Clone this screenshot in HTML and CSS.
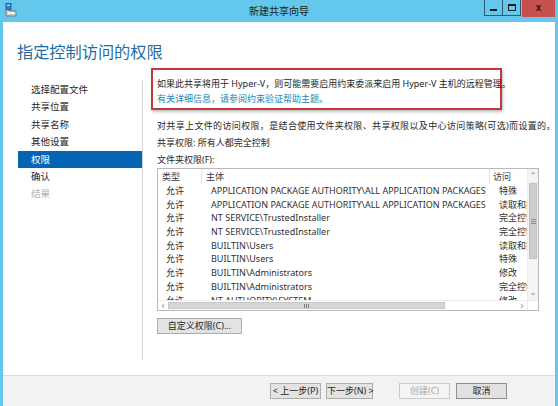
FILE: index.html
```html
<!DOCTYPE html>
<html lang="zh-CN">
<head>
<meta charset="utf-8">
<title>新建共享向导</title>
<link rel="stylesheet" href="styles.css">
</head>
<body>
<div class="window">
  <div class="titlebar">
    <svg class="app-icon" width="12" height="14" viewBox="0 0 12 14">
      <rect x="1" y="0.5" width="5" height="6" fill="#3a7fc4" stroke="#1d4f86" stroke-width="0.8"/>
      <rect x="2" y="1.5" width="3" height="1.5" fill="#9fd0f5"/>
      <path d="M1 7 L4 7 L5 8 L11 8 L11 13 L1 13 Z" fill="#c9c9c9" stroke="#6f6f6f" stroke-width="0.8"/>
      <rect x="2.5" y="9" width="7" height="2" fill="#f4f4f4"/>
    </svg>
    <div class="title">新建共享向导</div>
    <div class="caption-buttons">
      <div class="cap-btn"><span class="glyph-min"></span></div>
      <div class="cap-btn"><span class="glyph-max"></span></div>
      <div class="cap-close">x</div>
    </div>
  </div>

  <div class="content">
    <h1 class="heading">指定控制访问的权限</h1>
    <div class="body">
      <ul class="steps">
        <li class="step">选择配置文件</li>
        <li class="step">共享位置</li>
        <li class="step">共享名称</li>
        <li class="step">其他设置</li>
        <li class="step active">权限</li>
        <li class="step">确认</li>
        <li class="step disabled">结果</li>
      </ul>
      <div class="main">
        <div class="notice">
          <div class="notice-line">如果此共享将用于 Hyper-V，则可能需要启用约束委派来启用 Hyper-V 主机的远程管理。</div>
          <div class="notice-line link">有关详细信息，请参阅约束验证帮助主题。</div>
        </div>
        <p class="line first">对共享上文件的访问权限，是结合使用文件夹权限、共享权限以及中心访问策略(可选)而设置的。</p>
        <p class="line">共享权限: 所有人都完全控制</p>
        <p class="line">文件夹权限(F):</p>

        <div class="listview">
          <div class="viewport">
            <div class="row header">
              <div class="c-type">类型</div>
              <div class="c-who">主体</div>
              <div class="c-acc">访问</div>
            </div>
            <div class="row"><div class="c-type">允许</div><div class="c-who">APPLICATION PACKAGE AUTHORITY\ALL APPLICATION PACKAGES</div><div class="c-acc">特殊</div></div>
            <div class="row"><div class="c-type">允许</div><div class="c-who">APPLICATION PACKAGE AUTHORITY\ALL APPLICATION PACKAGES</div><div class="c-acc">读取和执行</div></div>
            <div class="row"><div class="c-type">允许</div><div class="c-who">NT SERVICE\TrustedInstaller</div><div class="c-acc">完全控制</div></div>
            <div class="row"><div class="c-type">允许</div><div class="c-who">NT SERVICE\TrustedInstaller</div><div class="c-acc">完全控制</div></div>
            <div class="row"><div class="c-type">允许</div><div class="c-who">BUILTIN\Users</div><div class="c-acc">读取和执行</div></div>
            <div class="row"><div class="c-type">允许</div><div class="c-who">BUILTIN\Users</div><div class="c-acc">特殊</div></div>
            <div class="row"><div class="c-type">允许</div><div class="c-who">BUILTIN\Administrators</div><div class="c-acc">修改</div></div>
            <div class="row"><div class="c-type">允许</div><div class="c-who">BUILTIN\Administrators</div><div class="c-acc">完全控制</div></div>
            <div class="row"><div class="c-type">允许</div><div class="c-who">NT AUTHORITY\SYSTEM</div><div class="c-acc">修改</div></div>
          </div>
          <div class="vscroll">
            <div class="arrow up">⌃</div>
            <div class="vthumb"><span class="grip-h"></span></div>
            <div class="spacer"></div>
            <div class="arrow down">⌄</div>
          </div>
          <div class="hscroll">
            <div class="harrow">&lsaquo;</div>
            <div class="hthumb"><span class="grip-v"></span></div>
            <div class="spacer"></div>
            <div class="harrow">&rsaquo;</div>
          </div>
          <div class="corner"></div>
        </div>

        <button class="btn custom">自定义权限(C)...</button>
      </div>
    </div>
  </div>

  <div class="footer">
    <button class="btn nav prev">&lt; 上一步(P)</button>
    <button class="btn nav next">下一步(N) &gt;</button>
    <button class="btn nav create" disabled>创建(C)</button>
    <button class="btn nav cancel">取消</button>
  </div>
</div>
</body>
</html>
```

FILE: styles.css
```css
* { box-sizing: border-box; }

html, body {
  margin: 0;
  padding: 0;
  width: 558px;
  height: 406px;
  overflow: hidden;
  background: #ffffff;
  font-family: "Noto Sans", "Noto Sans CJK SC", sans-serif;
  font-size: 9px;
  color: #262626;
}

.window {
  width: 558px;
  height: 406px;
  display: flex;
  flex-direction: column;
  border-left: 3px solid #64c7ec;
  border-right: 3px solid #64c7ec;
}

/* ---------- title bar ---------- */
.titlebar {
  height: 22px;
  flex: none;
  background: #64c7ec;
  display: flex;
  align-items: flex-start;
  position: relative;
}

.app-icon {
  margin: 3px 0 0 2px;
  flex: none;
}

.title {
  position: absolute;
  left: 0;
  right: 0;
  top: 4px;
  text-align: center;
  font-size: 10px;
  line-height: 14px;
  color: #1b1b1b;
}

.caption-buttons {
  margin-left: auto;
  display: flex;
  align-items: flex-start;
  position: relative;
}

.cap-btn {
  width: 19px;
  height: 16px;
  border: 1px solid #2f5d78;
  border-top: none;
  margin-right: -1px;
  display: flex;
  align-items: center;
  justify-content: center;
}

.glyph-min {
  width: 7px;
  height: 2px;
  background: #1a1a1a;
  margin-top: 4px;
}

.glyph-max {
  width: 8px;
  height: 7px;
  border: 1.5px solid #1a1a1a;
  border-top-width: 2px;
}

.cap-close {
  width: 33px;
  height: 17px;
  margin-left: 2px;
  background: #c7504f;
  color: #2a1414;
  font-size: 10px;
  font-weight: bold;
  line-height: 15px;
  text-align: center;
  font-family: "Liberation Sans", sans-serif;
}

/* ---------- content ---------- */
.content {
  flex: 1;
  display: flex;
  flex-direction: column;
  background: #ffffff;
}

.heading {
  margin: 0;
  padding: 17px 0 0 14px;
  height: 46px;
  font-size: 16.2px;
  line-height: 26px;
  font-weight: normal;
  color: #1f6c9d;
}

.body {
  flex: 1;
  display: flex;
  align-items: flex-start;
}

.steps {
  list-style: none;
  margin: 12px 0 0 0;
  padding: 1px 0 0 15px;
  width: 140px;
  height: 280px;
  border-right: 1px solid #d6d6d6;
  flex: none;
}

.step {
  height: 17.4px;
  line-height: 17.4px;
  padding-left: 13px;
  font-size: 9.5px;
  color: #262626;
}

.step.active {
  background: #0565b2;
  color: #ffffff;
}

.step.disabled {
  color: #b4b4b4;
}

.main {
  margin-left: 8px;
  width: 390px;
  display: flex;
  flex-direction: column;
  align-items: flex-start;
}

.notice {
  width: 351px;
  height: 42px;
  border: 2px solid #c3393a;
  box-shadow: 1px 2px 3px rgba(0, 0, 0, 0.25);
  padding: 7px 0 0 4px;
}

.notice-line {
  line-height: 14.5px;
  white-space: nowrap;
  color: #262626;
}

.notice-line.link {
  color: #1b86b4;
}

.line {
  margin: 2px 0 0 6px;
  line-height: 15px;
  white-space: nowrap;
}

.line.first {
  margin-top: 8px;
  letter-spacing: 0.35px;
}

/* ---------- list view ---------- */
.listview {
  margin: 1px 0 0 6px;
  width: 382px;
  height: 143px;
  border: 1px solid #b9b9b9;
  display: grid;
  grid-template-columns: 1fr 11px;
  grid-template-rows: 1fr 10px;
  background: #ffffff;
}

.viewport {
  overflow: hidden;
}

.row {
  display: flex;
  height: 13.7px;
  line-height: 13.7px;
  white-space: nowrap;
  color: #303030;
}

.row.header {
  height: 15px;
  line-height: 15px;
  color: #3a3a3a;
}

.c-type {
  width: 44px;
  flex: none;
  padding-left: 8px;
}

.c-who {
  width: 288px;
  flex: none;
  padding-left: 9px;
  overflow: hidden;
}

.c-acc {
  width: 60px;
  flex: none;
  padding-left: 9px;
  overflow: hidden;
}

.header .c-type { padding-left: 4px; border-right: 1px solid #e3e3e3; }
.header .c-who { padding-left: 4px; border-right: 1px solid #e3e3e3; }
.header .c-acc { padding-left: 3px; }

.vscroll {
  display: flex;
  flex-direction: column;
  background: #f4f4f4;
  border-left: 1px solid #ececec;
}

.arrow {
  height: 14px;
  text-align: center;
  font-size: 9px;
  line-height: 14px;
  color: #8a8a8a;
  font-family: "DejaVu Sans", sans-serif;
}

.arrow.down {
  height: 12px;
  line-height: 8px;
}

.vthumb {
  height: 76px;
  margin: 0 1px;
  background: #cdcdcd;
  border: 1px solid #c2c2c2;
  display: flex;
  align-items: center;
  justify-content: center;
}

.grip-h {
  width: 5px;
  height: 5px;
  border-top: 1px solid #8e8e8e;
  border-bottom: 1px solid #8e8e8e;
  background: linear-gradient(#8e8e8e, #8e8e8e) center / 5px 1px no-repeat;
}

.spacer { flex: 1; }

.hscroll {
  display: flex;
  align-items: stretch;
  background: #ffffff;
  border-top: 1px solid #ececec;
}

.harrow {
  width: 10px;
  text-align: center;
  font-size: 10px;
  line-height: 9px;
  color: #8a8a8a;
  font-family: "DejaVu Sans", sans-serif;
}

.hthumb {
  width: 277px;
  margin: 1px 0;
  background: #d6d6d6;
  border: 1px solid #c6c6c6;
  display: flex;
  align-items: center;
  justify-content: center;
}

.grip-v {
  width: 5px;
  height: 4px;
  border-left: 1px solid #7e7e7e;
  border-right: 1px solid #7e7e7e;
  background: linear-gradient(#7e7e7e, #7e7e7e) center / 1px 4px no-repeat;
}

.corner {
  background: #ffffff;
  border-top: 1px solid #ececec;
  border-left: 1px solid #ececec;
}

/* ---------- buttons ---------- */
.btn {
  font-family: "Noto Sans", "Noto Sans CJK SC", sans-serif;
  font-size: 9px;
  color: #262626;
  height: 16px;
  padding: 0;
  line-height: 14px;
  background: #e3e3e3;
  border: 1px solid #adadad;
  border-radius: 0;
  white-space: nowrap;
}

.btn.custom {
  margin: 7px 0 0 6px;
  width: 85px;
}

.footer {
  height: 31px;
  flex: none;
  background: #f3f1f4;
  border-top: 1px solid #dedede;
  display: flex;
  align-items: flex-start;
  padding: 7px 0 0 267px;
}

.btn.nav { width: 51px; }
.btn.prev { width: 51px; }
.btn.next { width: 47px; margin-left: 5px; }
.btn.create {
  margin-left: 26px;
  background: #f4f4f4;
  border-color: #cacaca;
  color: #a8a8a8;
}
.btn.cancel {
  margin-left: 6px;
  border-color: #8f8f8f;
  background: #e1e1e1;
}
```
